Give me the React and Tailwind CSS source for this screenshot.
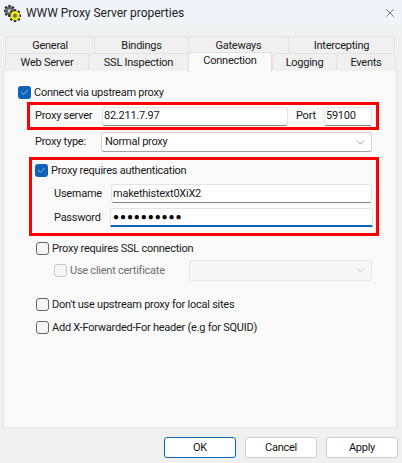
import React from "react";
import { X, ChevronDown, Check } from "lucide-react";

function Gears() {
  const teeth = [0, 45, 90, 135];
  return (
    <svg width="17" height="17" viewBox="0 0 20 20" className="shrink-0">
      <g>
        {teeth.map((a) => (
          <rect key={a} x="5" y="0" width="3" height="14" fill="#333" transform={`rotate(${a} 6.5 7)`} />
        ))}
        <circle cx="6.5" cy="7" r="5" fill="#666" />
        <circle cx="6.5" cy="7" r="2" fill="#ddd" />
      </g>
      <g>
        {teeth.map((a) => (
          <rect key={a} x="11.5" y="5" width="3" height="15" fill="#222" transform={`rotate(${a} 13 12.5)`} />
        ))}
        <circle cx="13" cy="12.5" r="5.5" fill="#e8e020" />
        <circle cx="13" cy="12.5" r="2.2" fill="#666" />
      </g>
    </svg>
  );
}

function Tab({ w, children, selected }) {
  if (selected) {
    return (
      <div className={`${w} h-[20px] -mt-px z-10 flex items-start pt-px leading-[14px] justify-center bg-[#f9f9f9] border border-b-0 border-[#e0e0e0] rounded-t-[3px]`}>
        {children}
      </div>
    );
  }
  return (
    <div className={`${w} h-full flex items-center justify-center leading-[13px] bg-[#f0f0f0] border border-b-0 border-[#e3e3e3] rounded-t-[3px] -mr-px`}>
      {children}
    </div>
  );
}

function Box({ checked, disabled }) {
  if (checked) {
    return (
      <span className="w-[13px] h-[13px] shrink-0 rounded-[3px] bg-[#0f62b8] flex items-center justify-center">
        <Check size={9} color="#ffffff" strokeWidth={1.5} />
      </span>
    );
  }
  return (
    <span className={`w-[13px] h-[13px] shrink-0 rounded-[3px] border bg-[#f5f5f5] ${disabled ? "border-[#c8c8c8]" : "border-[#666666]"}`} />
  );
}

function Field({ className, children }) {
  return (
    <div className={`h-[19px] bg-white border border-[#e3e3e3] border-b-[#868686] rounded-[3px] flex items-center px-[1px] text-[#1a1a1a] ${className}`}>
      {children}
    </div>
  );
}

function Btn({ children, primary }) {
  return (
    <div className={`w-[72px] h-[21px] bg-white rounded-[3px] flex items-center justify-center text-[#111] border ${primary ? "border-[#0a67b5]" : "border-[#cfcfcf]"}`}>
      {children}
    </div>
  );
}

export default function App() {
  return (
    <div className="w-[402px] h-[463px] flex flex-col overflow-hidden bg-[#f0f0f0] text-[11px] tracking-[-0.25px] leading-[16px] text-[#1a1a1a] font-['Roboto',sans-serif]">
      <div className="h-[26px] bg-[#f0f4f9] flex items-center pl-[4px] pr-[5px]">
        <Gears />
        <span className="ml-[5px] text-[#222] text-[12px] tracking-[-0.03px]">WWW Proxy Server properties</span>
        <X size={14} strokeWidth={1} color="#222" className="ml-auto" />
      </div>

      <div className="flex-1 px-[3px] pt-[10px]">
        <div className="pl-[2px] flex h-[17px]">
          <Tab w="w-[90px]">General</Tab>
          <Tab w="w-[95px]">Bindings</Tab>
          <Tab w="w-[101px]">Gateways</Tab>
          <Tab w="w-[107px]">Intercepting</Tab>
        </div>
        <div className="pl-[2px] flex h-[18px]">
          <Tab w="w-[84px]">Web Server</Tab>
          <Tab w="w-[101px]">SSL Inspection</Tab>
          <Tab w="w-[84px]" selected>Connection</Tab>
          <Tab w="w-[65px]">Logging</Tab>
          <Tab w="w-[60px]">Events</Tab>
        </div>

        <div className="w-[394px] h-[358px] bg-[#f9f9f9] border border-[#e5e5e5] -mt-px pl-[14px] pt-[15px]">
          <div className="flex items-center gap-[3px] h-[13px]">
            <Box checked />
            <span>Connect via upstream proxy</span>
          </div>

          <div className="ml-[9px] mt-[3px] w-[352px] h-[28px] border-[3px] border-[#ff0000] flex items-center pl-[5px]">
            <span className="w-[67px]">Proxy server</span>
            <Field className="w-[186px]">82.211.7.97</Field>
            <span className="ml-[8px] w-[28px]">Port</span>
            <Field className="w-[48px]">59100</Field>
          </div>

          <div className="ml-[17px] mt-[2px] flex items-center">
            <span className="w-[66px]">Proxy type:</span>
            <div className="w-[271px] h-[20px] bg-white border border-[#d5d5d5] border-b-[#a0a0a0] rounded-[3px] flex items-center justify-between pl-[3px] pr-[4px]">
              <span>Normal proxy</span>
              <ChevronDown size={13} strokeWidth={1} color="#444" />
            </div>
          </div>

          <div className="ml-[11px] mt-[5px] w-[350px] h-[79px] border-[3px] border-[#ff0000] pl-[3px] pt-[4px]">
            <div className="flex items-center gap-[3px] h-[13px]">
              <Box checked />
              <span>Proxy requires authentication</span>
            </div>
            <div className="flex items-center mt-[7px] pl-[19px]">
              <span className="w-[57px]">Username</span>
              <Field className="w-[261px]">makethistext0XiX2</Field>
            </div>
            <div className="flex items-center mt-[5px] pl-[19px]">
              <span className="w-[56px]">Password</span>
              <div className="w-[263px] h-[19px] bg-white border border-[#e3e3e3] border-b-2 border-b-[#0a67b5] rounded-t-[3px] flex items-center px-[2px] text-[10px] tracking-[0.9px] text-black">
                ●●●●●●●●●●
              </div>
            </div>
          </div>

          <div className="ml-[18px] mt-[6px] flex items-center gap-[3px] h-[13px]">
            <Box />
            <span>Proxy requires SSL connection</span>
          </div>
          <div className="ml-[36px] mt-[5px] flex items-center h-[21px] text-[#6d6d6d]">
            <Box disabled />
            <span className="ml-[3px] w-[119px]">Use client certificate</span>
            <div className="w-[183px] h-[21px] bg-[#f7f7f7] border border-[#e5e5e5] rounded-[3px] flex items-center justify-end pr-[4px]">
              <ChevronDown size={13} strokeWidth={1} color="#9a9a9a" />
            </div>
          </div>
          <div className="ml-[18px] mt-[17px] flex items-center gap-[3px] h-[13px]">
            <Box />
            <span>Don't use upstream proxy for local sites</span>
          </div>
          <div className="ml-[18px] mt-[10px] flex items-center gap-[3px] h-[13px]">
            <Box />
            <span>Add X-Forwarded-For header (e.g for SQUID)</span>
          </div>
        </div>

        <div className="flex justify-end gap-[9px] mt-[9px] pr-[1px]">
          <Btn primary>OK</Btn>
          <Btn>Cancel</Btn>
          <Btn>Apply</Btn>
        </div>
      </div>
    </div>
  );
}
